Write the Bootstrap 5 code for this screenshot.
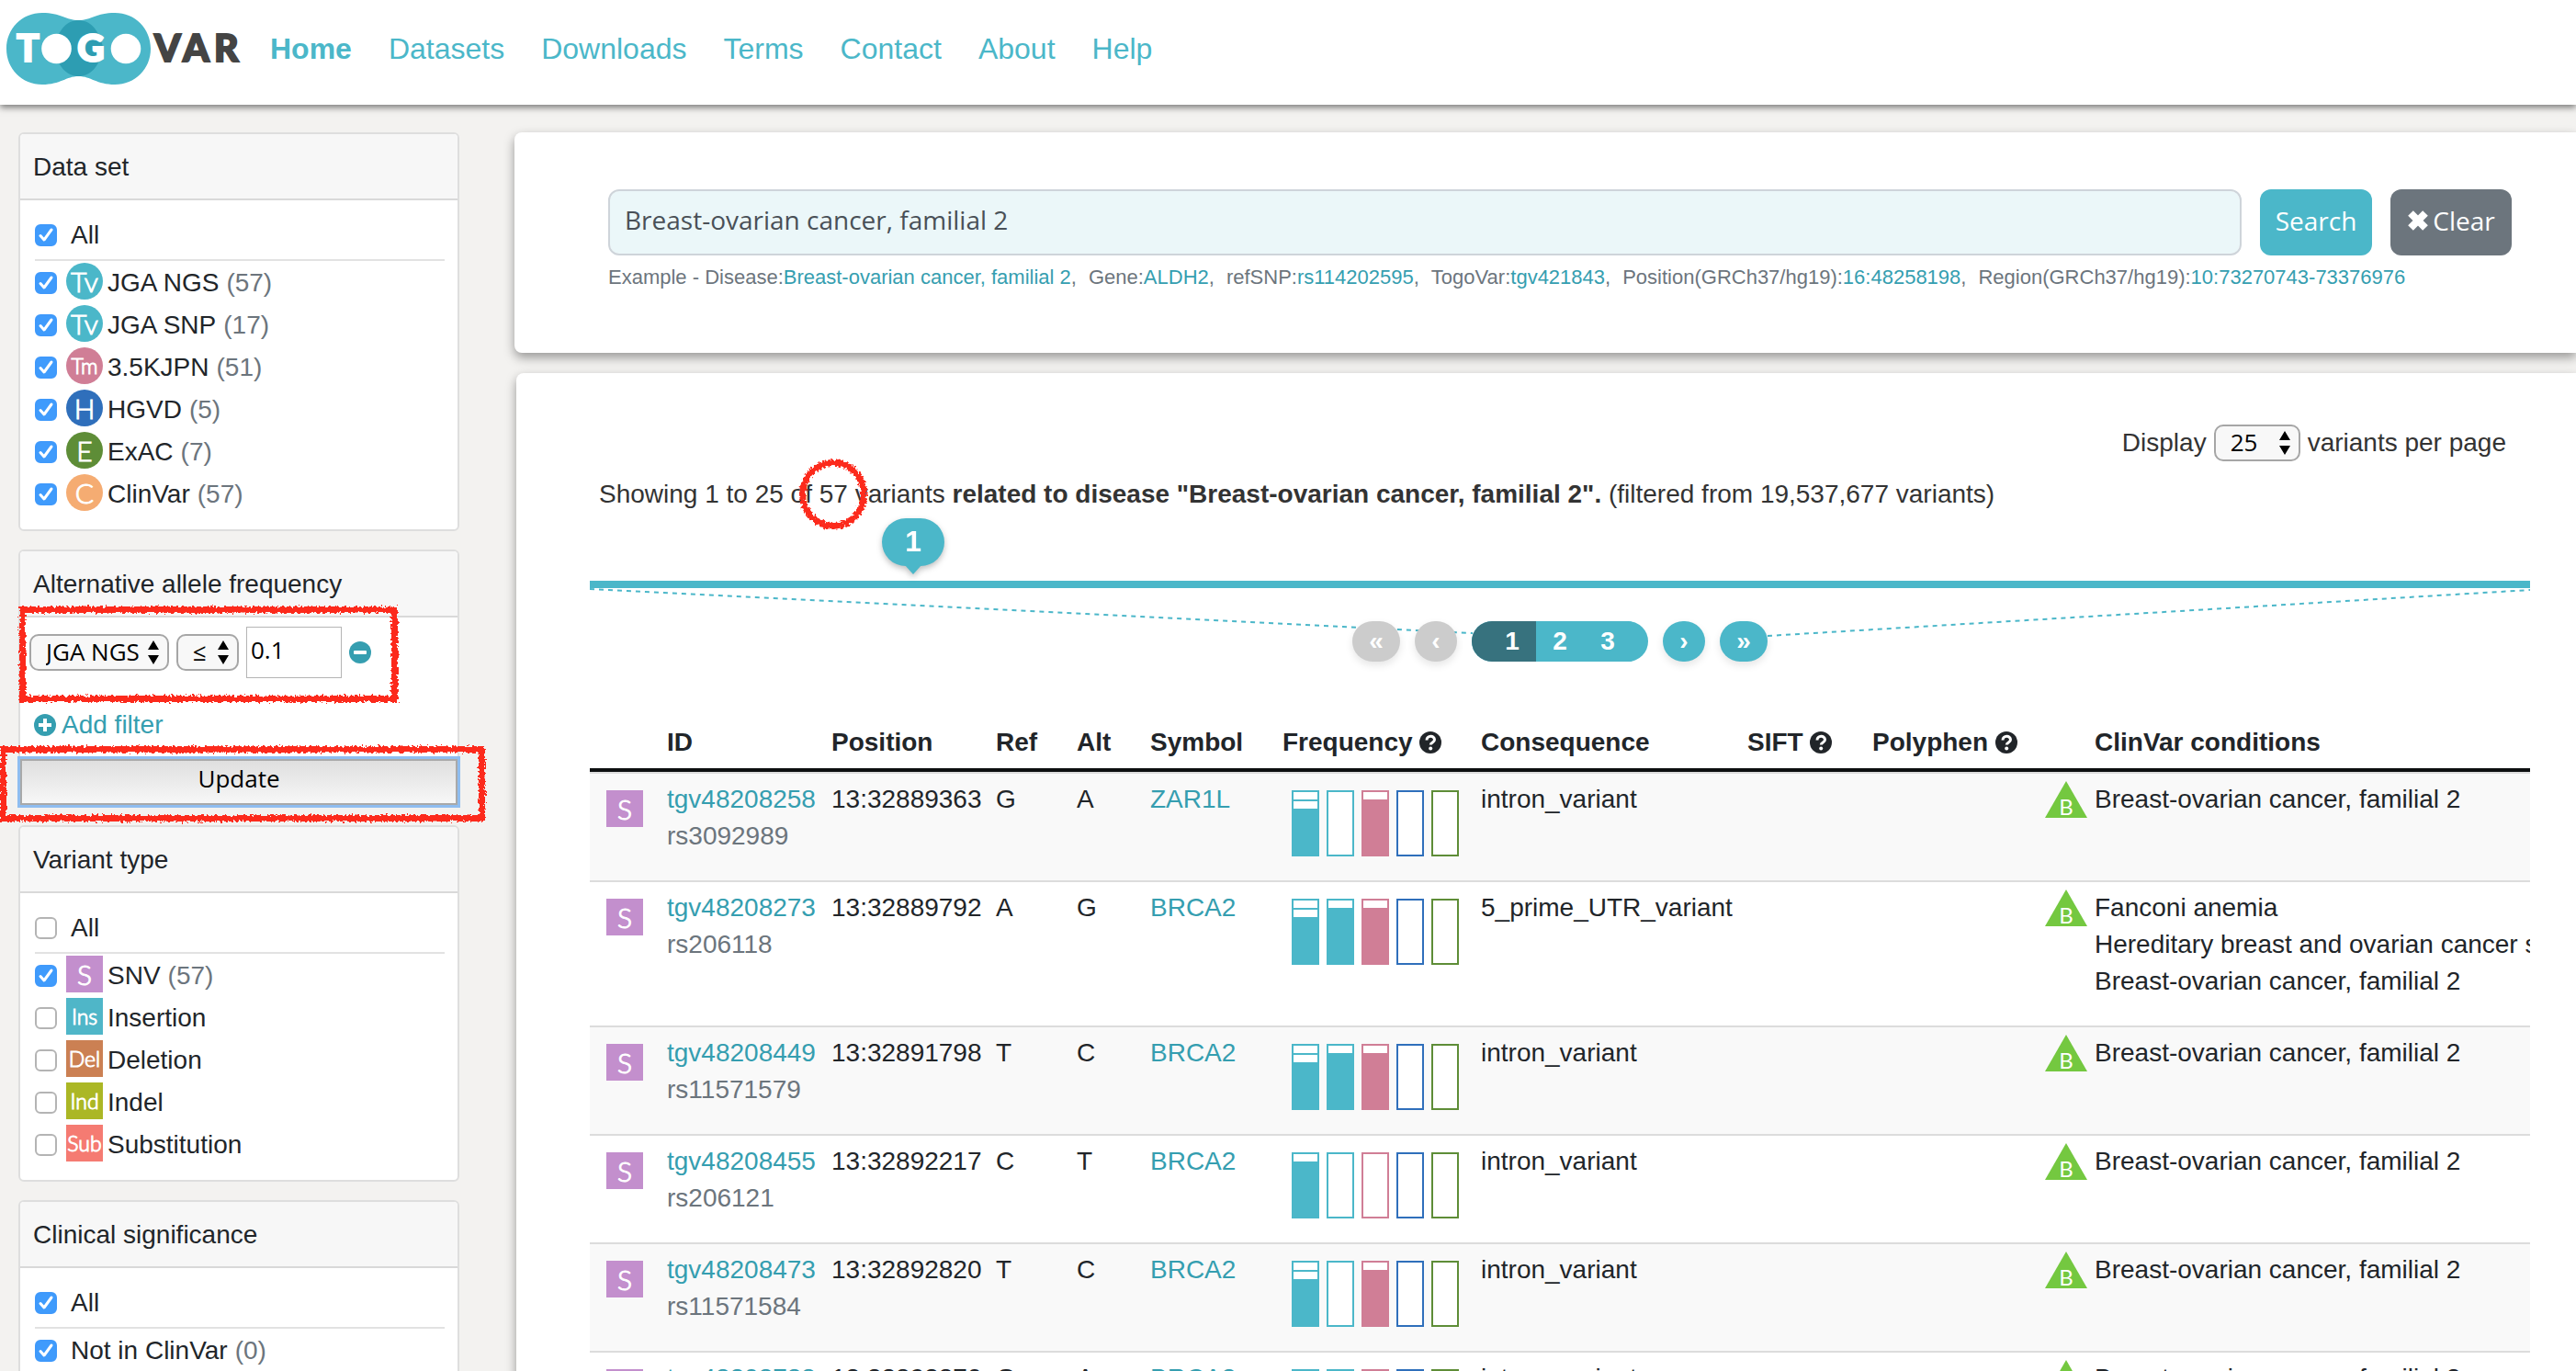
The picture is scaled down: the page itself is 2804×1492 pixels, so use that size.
<!DOCTYPE html>
<html lang="en">
<head>
<meta charset="utf-8">
<meta name="viewport" content="width=device-width, initial-scale=1">
<title>TogoVar</title>
<link href="https://cdn.jsdelivr.net/npm/bootstrap@5.3.0/dist/css/bootstrap.min.css" rel="stylesheet">
<style>
:root{--teal:#4bb7c9;--link:#359eb0;--pink:#d07e96;--blue:#2f6fbb;--green:#5e8d37}
body{font-family:"Liberation Sans",Arial,sans-serif;font-size:28px;line-height:40px;background:#f3f2f0;color:#212529}
a{color:var(--link);text-decoration:none}
.ui-font{font-family:"Open Sans","Noto Sans",sans-serif}

/* header */
.site-head{height:114px;background:#fff;box-shadow:0 3px 7px rgba(0,0,0,.5);z-index:2;padding:0 7px;flex:none}
.logo{display:block;width:256px;height:80px;margin-top:13px}
.site-nav{gap:40px;margin:33px 0 0 31px;font-size:32px}
.site-nav .nav-link{color:var(--teal);padding:0}
.site-nav .active{font-weight:700}

/* sidebar */
.side{width:480px;margin:30px 0 0 20px;flex:none}
.facet{border:2px solid #dedede;border-radius:6px;margin-bottom:20px;background:#fff}
.facet-head{background:#f7f7f7;border-bottom:2px solid #d9d9d9;padding:16px 14px;height:72px;border-radius:4px 4px 0 0}
.facet-body{padding:15px 14px 15px 16px}
.opt{height:46px;display:flex;align-items:center}
.opt-all{height:51px;padding-bottom:3px;border-bottom:2px solid #e2e2e2;margin-bottom:1px}
.opt .form-check-input{width:24px;height:24px;margin:0 10px 0 0;border:2px solid #b4b4b4;border-radius:6px;flex:none;background-color:#fff}
.opt .form-check-input:checked{border-color:#3f99fb;background-color:#3f9bfc;background-size:24px 24px;background-position:center;background-image:url("data:image/svg+xml,%3csvg xmlns='http://www.w3.org/2000/svg' viewBox='0 0 24 24'%3e%3cpath d='M6 12.500l4 4.500 8-11' fill='none' stroke='%23fff' stroke-width='3' stroke-linecap='round' stroke-linejoin='round'/%3e%3c/svg%3e")}
.opt .wide{margin-left:5px}
.opt .num{color:#6c757d;margin-left:8px}
.glyph{width:40px;height:40px;display:inline-flex;align-items:center;justify-content:center;color:#fff;font-family:Lato,sans-serif;font-weight:300;font-size:30px;line-height:40px;flex:none;-webkit-text-stroke:1px #fff}
.opt .glyph{margin:0 5px 4px 0}
.glyph.tight{font-size:23px}
.snv{background:#c38fcd}
.filter-row{padding:10px 0 0 10px;gap:8px}
.mac-select{appearance:none;-webkit-appearance:none;height:40px;border:2px solid #a6a6a6;border-radius:10px;color:#000;font-size:26px;line-height:34px;padding:0 30px 2px 16px;background:#f8f8f8 url("data:image/svg+xml,%3csvg xmlns='http://www.w3.org/2000/svg' viewBox='0 0 14 26'%3e%3cpath d='M7 0l6 10H1zM7 26l6-10H1z'/%3e%3c/svg%3e") no-repeat right 8px center/14px 26px}
.mac-select.op{width:68px}
.mac-select.count{width:94px}
.num-input{width:104px;height:56px;border:1px solid #b5b5b5;font-size:26px;padding:0 4px 6px;color:#000;border-radius:0}
.icon-btn{border:0;background:none;padding:0;display:flex}
.update{display:block;width:100%;height:50px;border:2px solid #a9a9a9;background:linear-gradient(#dfdfdf,#f7f7f7);outline:3px solid #8fbdf0;font-size:26px;line-height:36px;color:#000;padding:0 0 8px}
.add-filter{gap:6px;padding:31px 0 17px 15px}

/* red pen marks */
.pen{position:absolute;border:7px solid #fc2b1d;pointer-events:none;filter:url(#brush)}
.pen-filter{left:-1px;top:-12px;width:412px;height:104px}
.pen-update{left:-22px;right:-30px;top:-14px;height:82px}
.pen-count{border-radius:50%;width:74px;height:76px;left:50%;top:50%;transform:translate(-50%,-50%)}

/* main panels */
.panes{margin:30px 0 0 60px;min-width:0}
.pane{background:#fff;border-radius:8px 0 0 8px;box-shadow:0 5px 12px rgba(0,0,0,.38)}
.pane-search{padding:62px 70px 62px 102px;height:240px;margin-bottom:22px}
.pane-result{padding:56px 50px 0 80px;margin-left:2px}
.q{height:72px;background-color:#ebf7f9!important;border:2px solid #ced4da;border-radius:12px;font-size:28px;color:#495057;padding:0 16px 6px}
.act{height:72px;border-radius:12px;font-size:28px;font-weight:500;border:0;padding:0 0 4px;color:#fff;display:flex;align-items:center;justify-content:center;gap:4px;flex:none}
.act-search{background:var(--teal);width:122px}
.act-clear{background:#6c757d;width:132px}
.example{font-size:22px;line-height:40px;color:#6c757d;column-gap:13px;margin-top:4px}
.pane-result .dim{color:#333}
.axis{height:82px;border-bottom:8px solid var(--teal)}
.pin{position:absolute;left:16.67%;top:6px;width:68px;height:52px;margin-left:-34px;border-radius:26px;background:var(--teal);color:#fff;font-weight:700;font-size:32px;line-height:50px;text-align:center;filter:drop-shadow(0 3px 3px rgba(0,0,0,.25))}
.pin::after{content:"";position:absolute;left:24px;top:50px;border:10px solid transparent;border-top:11px solid var(--teal);border-bottom:0}
.fan{position:absolute;left:0;top:0;width:100%;height:60px}
.pager{padding-top:36px;gap:16px}
.pager button{position:relative;border:0;height:44px;color:#fff;background:var(--teal);font-weight:700;font-size:28px;line-height:40px;padding:0}
.pager .round{border-radius:22px;width:46px;box-shadow:0 4px 8px rgba(0,0,0,.1)}
.pager .end{width:52px}
.pager button:disabled{background:#ccc}
.pages{position:relative;border-radius:22px;overflow:hidden;display:flex;background:var(--teal);padding-right:18px}
.pages button{width:52px}
.pages .now{width:70px;padding-left:18px;background:#37727e}

/* result table */
.hits{table-layout:fixed;width:100%;border-collapse:separate;border-spacing:0;margin-top:60px;color:#212529}
.hits th{padding:8px;border-bottom:4px solid #0d0f10;white-space:nowrap}
.hits td{padding:8px 0 28px 8px;border-top:2px solid #dcdcdc;vertical-align:top;white-space:nowrap;overflow:hidden}
.hits tbody tr:nth-child(odd) td{background:#f9f9f9}
.hits td.kind{padding:18px 0 0 18px}
.hits td.freq{padding:18px 0 0 18px}
.hits th:last-child{padding-left:62px}
.hits .glyph{vertical-align:top}
.rs{color:#6c757d}
.bars{display:flex;gap:8px}
.bars i{width:30px;height:72px;border:2px solid var(--c);background:#fff}
.bars .lo{background:linear-gradient(#fff 8px,var(--c) 8px)}
.bars .mid{background:linear-gradient(#fff 8px,var(--c) 8px 10px,#fff 10px 18px,var(--c) 18px)}
.t{--c:var(--teal)}.p{--c:var(--pink)}.b{--c:var(--blue)}.g{--c:var(--green)}
.cond{display:flex;gap:8px}
.tri{width:46px;height:40px;flex:none}
.q-mark{vertical-align:-3px}
</style>
<script src="https://cdn.jsdelivr.net/npm/bootstrap@5.3.0/dist/js/bootstrap.bundle.min.js"></script>
</head>
<body class="vh-100 overflow-hidden d-flex flex-column">
<svg width="0" height="0" class="position-absolute" aria-hidden="true">
  <filter id="brush" x="-5%" y="-10%" width="110%" height="120%"><feTurbulence type="fractalNoise" baseFrequency=".35" numOctaves="2" seed="4"/><feDisplacementMap in="SourceGraphic" scale="7" xChannelSelector="R" yChannelSelector="G"/></filter>
  <symbol id="help" viewBox="0 0 24 24"><circle cx="12" cy="12" r="12" fill="#212529"/><path d="M8 9.500c0-5.500 8.500-5.500 8.500-.5 0 3-4.200 2.800-4.200 5.500" fill="none" stroke="#fff" stroke-width="3"/><circle cx="12.200" cy="18.500" r="2" fill="#fff"/></symbol>
  <symbol id="benign" viewBox="0 0 46 40"><path d="M23 0l23 40H0z" fill="#74c840"/><text x="23" y="37" text-anchor="middle" font-family="Lato,sans-serif" font-weight="400" font-size="24" fill="#fff">B</text></symbol>
</svg>

<header class="site-head d-flex align-items-start position-relative">
  <a href="#" aria-label="TogoVar"><svg class="logo" viewBox="7 13 256 80">
    <path d="M46 14c20 0 26 8 39.500 8s19.500-8 39.500-8c22 0 39 17 39 39s-17 39-39 39c-20 0-26-9-39.500-9s-19.500 9-39.500 9c-22 0-39-17-39-39s17-39 39-39z" fill="#4bb7c9"/>
    <path d="M85.500 22c12 0 22 9 27 31-5 21-15 30-27 30s-22-9-27-30c5-22 15-31 27-31z" fill="#2d9db2"/>
    <g fill="#fff"><circle cx="61.500" cy="53" r="16.300"/><circle cx="137" cy="53" r="16.300"/></g>
    <g font-family="Lato,sans-serif" font-weight="900" font-size="41" stroke-width="2"><text fill="#fff" stroke="#fff"><tspan x="18" y="67">T</tspan><tspan x="84" y="67">G</tspan></text><text fill="#444" stroke="#444"><tspan x="168" y="67">V</tspan><tspan x="199" y="67">A</tspan><tspan x="233" y="67">R</tspan></text></g>
  </svg></a>
  <nav class="nav site-nav">
    <a class="nav-link active" href="#">Home</a><a class="nav-link" href="#">Datasets</a><a class="nav-link" href="#">Downloads</a><a class="nav-link" href="#">Terms</a><a class="nav-link" href="#">Contact</a><a class="nav-link" href="#">About</a><a class="nav-link" href="#">Help</a>
  </nav>
</header>

<div class="d-flex flex-grow-1">
<aside class="side">
  <section class="facet">
    <div class="facet-head">Data set</div>
    <div class="facet-body">
      <label class="opt opt-all"><input class="form-check-input" type="checkbox" checked><span class="wide">All</span></label>
      <label class="opt"><input class="form-check-input" type="checkbox" checked><span class="glyph rounded-circle" style="background:#4bb7c9">Tv</span>JGA NGS<span class="num">(57)</span></label>
      <label class="opt"><input class="form-check-input" type="checkbox" checked><span class="glyph rounded-circle" style="background:#4bb7c9">Tv</span>JGA SNP<span class="num">(17)</span></label>
      <label class="opt"><input class="form-check-input" type="checkbox" checked><span class="glyph rounded-circle tight" style="background:#d07e96">Tm</span>3.5KJPN<span class="num">(51)</span></label>
      <label class="opt"><input class="form-check-input" type="checkbox" checked><span class="glyph rounded-circle" style="background:#2f6fbb">H</span>HGVD<span class="num">(5)</span></label>
      <label class="opt"><input class="form-check-input" type="checkbox" checked><span class="glyph rounded-circle" style="background:#5e8d37">E</span>ExAC<span class="num">(7)</span></label>
      <label class="opt"><input class="form-check-input" type="checkbox" checked><span class="glyph rounded-circle" style="background:#f5ac72">C</span>ClinVar<span class="num">(57)</span></label>
    </div>
  </section>

  <section class="facet">
    <div class="facet-head">Alternative allele frequency</div>
    <div class="position-relative">
      <div class="filter-row d-flex align-items-center">
        <select class="mac-select ui-font" aria-label="Data set"><option>JGA NGS</option></select>
        <select class="mac-select op ui-font" aria-label="Comparison"><option>≤</option></select>
        <input class="num-input ui-font" type="text" value="0.1" aria-label="Frequency">
        <button class="icon-btn" type="button" aria-label="Remove filter"><svg width="24" height="24" viewBox="0 0 24 24"><circle cx="12" cy="12" r="12" fill="#359eb0"/><rect x="5" y="10" width="14" height="4" rx="1" fill="#fff"/></svg></button>
      </div>
      <div class="pen pen-filter"></div>
    </div>
    <a class="add-filter d-flex align-items-center" href="#"><svg width="24" height="24" viewBox="0 0 24 24"><circle cx="12" cy="12" r="12" fill="#359eb0"/><path d="M5 12h14M12 5v14" stroke="#fff" stroke-width="4"/></svg>Add filter</a>
    <div class="position-relative">
      <button class="update ui-font" type="button">Update</button>
      <div class="pen pen-update"></div>
    </div>
  </section>

  <section class="facet">
    <div class="facet-head">Variant type</div>
    <div class="facet-body">
      <label class="opt opt-all"><input class="form-check-input" type="checkbox"><span class="wide">All</span></label>
      <label class="opt"><input class="form-check-input" type="checkbox" checked><span class="glyph snv">S</span>SNV<span class="num">(57)</span></label>
      <label class="opt"><input class="form-check-input" type="checkbox"><span class="glyph tight" style="background:#4fb6c8">Ins</span>Insertion</label>
      <label class="opt"><input class="form-check-input" type="checkbox"><span class="glyph tight" style="background:#cb8053">Del</span>Deletion</label>
      <label class="opt"><input class="form-check-input" type="checkbox"><span class="glyph tight" style="background:#abb725">Ind</span>Indel</label>
      <label class="opt"><input class="form-check-input" type="checkbox"><span class="glyph tight" style="background:#f57b72">Sub</span>Substitution</label>
    </div>
  </section>

  <section class="facet">
    <div class="facet-head">Clinical significance</div>
    <div class="facet-body">
      <label class="opt opt-all"><input class="form-check-input" type="checkbox" checked><span class="wide">All</span></label>
      <label class="opt"><input class="form-check-input" type="checkbox" checked><span class="wide">Not in ClinVar</span><span class="num">(0)</span></label>
    </div>
  </section>
</aside>

<main class="panes flex-grow-1">
  <form class="pane pane-search">
    <div class="d-flex" style="gap:20px">
      <input class="form-control q ui-font" type="text" value="Breast-ovarian cancer, familial 2" aria-label="Search">
      <button class="act act-search ui-font" type="button">Search</button>
      <button class="act act-clear ui-font" type="button"><svg width="24" height="24" viewBox="0 0 24 24"><path d="M4 4l16 16M20 4L4 20" stroke="#fff" stroke-width="8"/></svg>Clear</button>
    </div>
    <div class="example d-flex flex-wrap">
      <span>Example - Disease:<a href="#">Breast-ovarian cancer, familial 2</a>,</span>
      <span>Gene:<a href="#">ALDH2</a>,</span>
      <span>refSNP:<a href="#">rs114202595</a>,</span>
      <span>TogoVar:<a href="#">tgv421843</a>,</span>
      <span>Position(GRCh37/hg19):<a href="#">16:48258198</a>,</span>
      <span>Region(GRCh37/hg19):<a href="#">10:73270743-73376976</a></span>
    </div>
  </form>

  <section class="pane pane-result">
    <div class="dim d-flex justify-content-end align-items-center" style="gap:8px;padding-right:26px">
      <label for="perpage">Display</label>
      <select id="perpage" class="mac-select count ui-font"><option>25</option></select>
      <span>variants per page</span>
    </div>
    <div class="dim" style="padding:16px 0 0 10px">Showing 1 to 25 of <span class="position-relative">57<span class="pen pen-count"></span></span> variants <strong>related to disease "Breast-ovarian cancer, familial 2".</strong> (filtered from 19,537,677 variants)</div>
    <div class="axis position-relative"><div class="pin">1</div></div>
    <nav class="pager d-flex justify-content-center position-relative" aria-label="Result pages">
      <svg class="fan" aria-hidden="true"><g stroke="#4bb7c9" stroke-width="2" stroke-dasharray="5 5"><line x1="0" y1="1" x2="45.500%" y2="49"/><line x1="60.700%" y1="52" x2="100%" y2="2"/></g></svg>
      <button class="round end" type="button" disabled>«</button>
      <button class="round" type="button" disabled>‹</button>
      <div class="pages"><button class="now" type="button">1</button><button type="button">2</button><button type="button">3</button></div>
      <button class="round" type="button">›</button>
      <button class="round end" type="button">»</button>
    </nav>

    <table class="hits">
      <colgroup><col style="width:76px"><col style="width:179px"><col style="width:179px"><col style="width:88px"><col style="width:80px"><col style="width:144px"><col style="width:216px"><col style="width:290px"><col style="width:136px"><col style="width:188px"><col></colgroup>
      <thead><tr><th></th><th>ID</th><th>Position</th><th>Ref</th><th>Alt</th><th>Symbol</th><th>Frequency <svg class="q-mark" width="24" height="24"><use href="#help"/></svg></th><th>Consequence</th><th>SIFT <svg class="q-mark" width="24" height="24"><use href="#help"/></svg></th><th>Polyphen <svg class="q-mark" width="24" height="24"><use href="#help"/></svg></th><th>ClinVar conditions</th></tr></thead>
      <tbody>
      <tr><td class="kind"><span class="glyph snv">S</span></td><td><a href="#">tgv48208258</a><div class="rs">rs3092989</div></td><td>13:32889363</td><td>G</td><td>A</td><td><a href="#">ZAR1L</a></td>
        <td class="freq"><div class="bars"><i class="t mid"></i><i class="t"></i><i class="p lo"></i><i class="b"></i><i class="g"></i></div></td><td>intron_variant</td><td></td><td></td>
        <td><div class="cond"><svg class="tri"><use href="#benign"/></svg><div>Breast-ovarian cancer, familial 2</div></div></td></tr>
      <tr><td class="kind"><span class="glyph snv">S</span></td><td><a href="#">tgv48208273</a><div class="rs">rs206118</div></td><td>13:32889792</td><td>A</td><td>G</td><td><a href="#">BRCA2</a></td>
        <td class="freq"><div class="bars"><i class="t mid"></i><i class="t lo"></i><i class="p lo"></i><i class="b"></i><i class="g"></i></div></td><td>5_prime_UTR_variant</td><td></td><td></td>
        <td><div class="cond"><svg class="tri"><use href="#benign"/></svg><div>Fanconi anemia<br>Hereditary breast and ovarian cancer syndrome<br>Breast-ovarian cancer, familial 2</div></div></td></tr>
      <tr><td class="kind"><span class="glyph snv">S</span></td><td><a href="#">tgv48208449</a><div class="rs">rs11571579</div></td><td>13:32891798</td><td>T</td><td>C</td><td><a href="#">BRCA2</a></td>
        <td class="freq"><div class="bars"><i class="t mid"></i><i class="t lo"></i><i class="p lo"></i><i class="b"></i><i class="g"></i></div></td><td>intron_variant</td><td></td><td></td>
        <td><div class="cond"><svg class="tri"><use href="#benign"/></svg><div>Breast-ovarian cancer, familial 2</div></div></td></tr>
      <tr><td class="kind"><span class="glyph snv">S</span></td><td><a href="#">tgv48208455</a><div class="rs">rs206121</div></td><td>13:32892217</td><td>C</td><td>T</td><td><a href="#">BRCA2</a></td>
        <td class="freq"><div class="bars"><i class="t lo"></i><i class="t"></i><i class="p"></i><i class="b"></i><i class="g"></i></div></td><td>intron_variant</td><td></td><td></td>
        <td><div class="cond"><svg class="tri"><use href="#benign"/></svg><div>Breast-ovarian cancer, familial 2</div></div></td></tr>
      <tr><td class="kind"><span class="glyph snv">S</span></td><td><a href="#">tgv48208473</a><div class="rs">rs11571584</div></td><td>13:32892820</td><td>T</td><td>C</td><td><a href="#">BRCA2</a></td>
        <td class="freq"><div class="bars"><i class="t mid"></i><i class="t"></i><i class="p lo"></i><i class="b"></i><i class="g"></i></div></td><td>intron_variant</td><td></td><td></td>
        <td><div class="cond"><svg class="tri"><use href="#benign"/></svg><div>Breast-ovarian cancer, familial 2</div></div></td></tr>
      <tr><td class="kind"><span class="glyph snv">S</span></td><td><a href="#">tgv48208788</a><div class="rs">rs11571590</div></td><td>13:32893870</td><td>G</td><td>A</td><td><a href="#">BRCA2</a></td>
        <td class="freq"><div class="bars"><i class="t lo"></i><i class="t lo"></i><i class="p lo"></i><i class="b"></i><i class="g"></i></div></td><td>intron_variant</td><td></td><td></td>
        <td><div class="cond"><svg class="tri"><use href="#benign"/></svg><div>Breast-ovarian cancer, familial 2</div></div></td></tr>
      </tbody>
    </table>
  </section>
</main>
</div>
</body>
</html>
